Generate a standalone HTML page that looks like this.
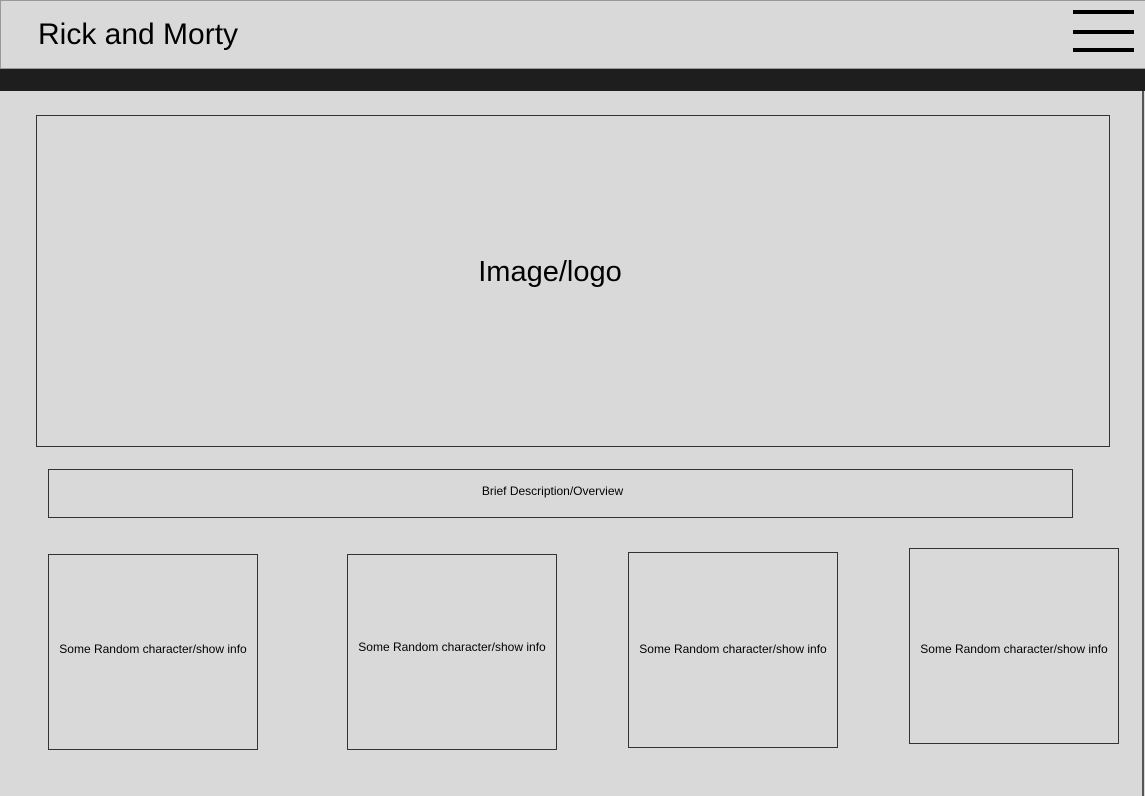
<!DOCTYPE html>
<html><head><meta charset="utf-8"><style>
*{margin:0;padding:0;box-sizing:border-box}
body{width:1145px;height:796px;background:#d9d9d9;position:relative;overflow:hidden;font-family:"Liberation Sans",sans-serif;color:#000}
.abs{position:absolute}
.box{position:absolute;border:1px solid #333;display:flex;align-items:center;justify-content:center;text-align:center}
.card{font-size:12px}
</style></head><body>
<div class="abs" style="left:0;top:0;width:1145px;height:69px;border-top:1px solid #999;border-left:1px solid #999;border-bottom:1px solid #999"></div>
<div class="abs" style="left:38px;top:16px;font-size:30px;line-height:38px">Rick and Morty</div>
<div class="abs" style="left:1073px;top:10px;width:61px;height:4px;background:#000"></div>
<div class="abs" style="left:1073px;top:30px;width:61px;height:4px;background:#000"></div>
<div class="abs" style="left:1073px;top:48px;width:61px;height:4px;background:#000"></div>
<div class="abs" style="left:0;top:69px;width:1145px;height:22px;background:#1e1e1e"></div>
<div class="abs" style="left:1142px;top:91px;width:2px;height:705px;background:#555"></div>
<div class="box" style="left:36px;top:115px;width:1074px;height:332px;font-size:29px;padding-right:46px;padding-bottom:18px">Image/logo</div>
<div class="box" style="left:48px;top:469px;width:1025px;height:49px;font-size:12px;padding-right:16px;padding-bottom:6px">Brief Description/Overview</div>
<div class="box card" style="left:48px;top:554px;width:210px;height:196px;padding-bottom:6px">Some Random character/show info</div>
<div class="box card" style="left:347px;top:554px;width:210px;height:196px;padding-bottom:10px">Some Random character/show info</div>
<div class="box card" style="left:628px;top:552px;width:210px;height:196px;padding-bottom:2px">Some Random character/show info</div>
<div class="box card" style="left:909px;top:548px;width:210px;height:196px;padding-top:6px">Some Random character/show info</div>
</body></html>
